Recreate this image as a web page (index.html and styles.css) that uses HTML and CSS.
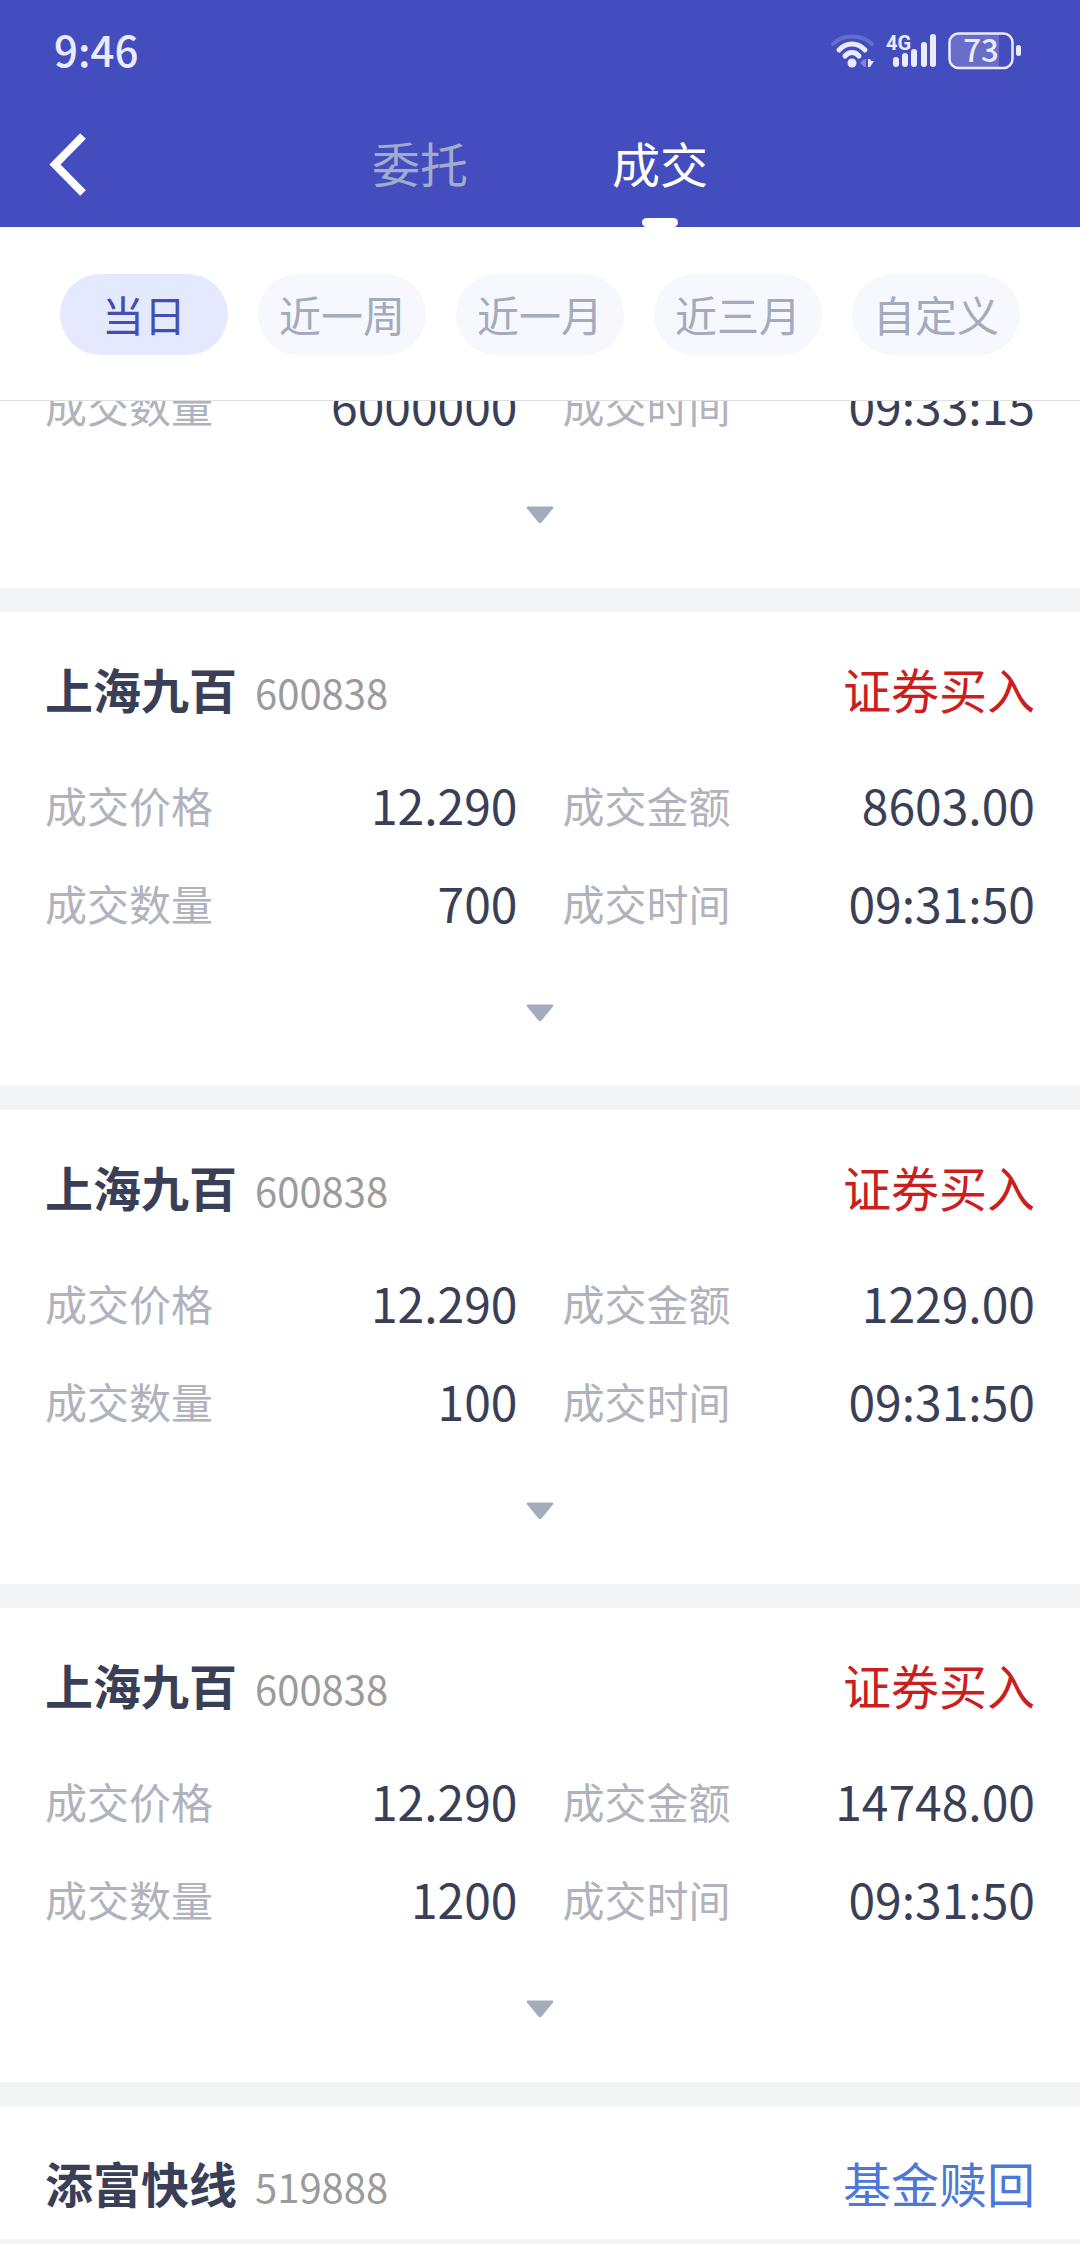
FILE: index.html
```html
<!DOCTYPE html>
<html lang="zh-CN">
<head>
<meta charset="utf-8">
<meta name="viewport" content="width=device-width, initial-scale=1">
<title>成交</title>
<link rel="stylesheet" href="styles.css">
</head>
<body>
<header class="top">
  <div class="status">
    <span class="clock">9:46</span>
    <div class="status-icons">
      <svg class="wifi" width="46" height="38" viewBox="0 0 46 38" fill="none" stroke="#ebebff" stroke-linecap="round" aria-hidden="true">
        <path d="M3 12Q10 4.500 22 4.500T42 12" stroke-width="4" stroke="#666ccb"/>
        <path d="M9 18Q14.500 12 22 12T35 18" stroke-width="5"/>
        <path d="M15 24Q18 20.500 22 20.500T29 24" stroke-width="5"/>
        <circle cx="22" cy="31" r="4.500" fill="#ebebff" stroke="none"/>
        <path d="M36 27v8h-2l-4-4 4-4z" fill="#7e83d8" stroke="none"/>
        <path d="M38 27h2l1 2h3l-2 3-2 3h-2z" fill="#ebebff" stroke="none"/>
      </svg>
      <svg class="signal" width="52" height="38" viewBox="0 0 52 38" fill="#ebebff" aria-hidden="true">
        <text class="network" x="0" y="18">4G</text>
        <rect x="7" y="25" width="6" height="10" rx="3"/>
        <rect x="16" y="21" width="6" height="14" rx="3"/>
        <rect x="25" y="17" width="6" height="18" rx="3"/>
        <rect x="35" y="10" width="6" height="25" rx="3"/>
        <rect x="44" y="2" width="6" height="33" rx="3"/>
      </svg>
      <svg class="battery" width="74" height="38" viewBox="0 0 74 38" aria-hidden="true">
        <path d="M10 1H51V36H10Q1.500 36 1.500 27V10Q1.500 1 10 1z" fill="#686dca"/>
        <rect x="1.500" y="1.500" width="63" height="34.500" rx="9" fill="none" stroke="#ebebff" stroke-width="2.500"/>
        <rect x="68" y="13" width="5" height="11" rx="2.500" fill="#ebebff"/>
        <text class="level" x="33" y="30" text-anchor="middle">73</text>
      </svg>
    </div>
  </div>
  <nav class="nav">
    <button class="back" type="button" aria-label="返回">
      <svg width="38" height="64" viewBox="0 0 38 64" fill="none" stroke="#fff" stroke-width="8" aria-hidden="true"><path d="M35 3L7 31.500l28 28.500"/></svg>
    </button>
    <div class="tabs">
      <button class="tab" type="button">委托</button>
      <button class="tab tab-active" type="button">成交</button>
    </div>
  </nav>
</header>
<div class="filters">
  <button class="pill pill-active" type="button">当日</button>
  <button class="pill" type="button">近一周</button>
  <button class="pill" type="button">近一月</button>
  <button class="pill" type="button">近三月</button>
  <button class="pill" type="button">自定义</button>
</div>
<main class="feed">
  <article class="card card-scrolled">
    <dl class="facts">
      <div class="fact"><dt>成交数量</dt><dd>6000000</dd></div>
      <div class="fact"><dt>成交时间</dt><dd>09:33:15</dd></div>
    </dl>
    <button class="more" type="button" aria-label="展开"><svg width="28" height="18" viewBox="0 0 28 18" aria-hidden="true"><path d="M2 .5H26Q28 .5 27 2.500L15.500 16.500Q14 18 12.500 16.500L1 2.500Q0 .5 2 .5z"/></svg></button>
  </article>
  <article class="card">
    <div class="head"><h2 class="name">上海九百</h2><span class="code">600838</span><span class="side buy">证券买入</span></div>
    <dl class="facts">
      <div class="fact"><dt>成交价格</dt><dd>12.290</dd></div>
      <div class="fact"><dt>成交金额</dt><dd>8603.00</dd></div>
      <div class="fact"><dt>成交数量</dt><dd>700</dd></div>
      <div class="fact"><dt>成交时间</dt><dd>09:31:50</dd></div>
    </dl>
    <button class="more" type="button" aria-label="展开"><svg width="28" height="18" viewBox="0 0 28 18" aria-hidden="true"><path d="M2 .5H26Q28 .5 27 2.500L15.500 16.500Q14 18 12.500 16.500L1 2.500Q0 .5 2 .5z"/></svg></button>
  </article>
  <article class="card">
    <div class="head"><h2 class="name">上海九百</h2><span class="code">600838</span><span class="side buy">证券买入</span></div>
    <dl class="facts">
      <div class="fact"><dt>成交价格</dt><dd>12.290</dd></div>
      <div class="fact"><dt>成交金额</dt><dd>1229.00</dd></div>
      <div class="fact"><dt>成交数量</dt><dd>100</dd></div>
      <div class="fact"><dt>成交时间</dt><dd>09:31:50</dd></div>
    </dl>
    <button class="more" type="button" aria-label="展开"><svg width="28" height="18" viewBox="0 0 28 18" aria-hidden="true"><path d="M2 .5H26Q28 .5 27 2.500L15.500 16.500Q14 18 12.500 16.500L1 2.500Q0 .5 2 .5z"/></svg></button>
  </article>
  <article class="card">
    <div class="head"><h2 class="name">上海九百</h2><span class="code">600838</span><span class="side buy">证券买入</span></div>
    <dl class="facts">
      <div class="fact"><dt>成交价格</dt><dd>12.290</dd></div>
      <div class="fact"><dt>成交金额</dt><dd>14748.00</dd></div>
      <div class="fact"><dt>成交数量</dt><dd>1200</dd></div>
      <div class="fact"><dt>成交时间</dt><dd>09:31:50</dd></div>
    </dl>
    <button class="more" type="button" aria-label="展开"><svg width="28" height="18" viewBox="0 0 28 18" aria-hidden="true"><path d="M2 .5H26Q28 .5 27 2.500L15.500 16.500Q14 18 12.500 16.500L1 2.500Q0 .5 2 .5z"/></svg></button>
  </article>
  <article class="card card-head-only">
    <div class="head"><h2 class="name">添富快线</h2><span class="code">519888</span><span class="side redeem">基金赎回</span></div>
  </article>
</main>
<div class="bottom-edge"></div>
</body>
</html>
```
FILE: styles.css
```css
* {
  box-sizing: border-box;
}

body {
  margin: 0;
  background: #fff;
  color: #3a3f58;
  font-family: "Noto Sans CJK SC", "Noto Sans", sans-serif;
}

button {
  margin: 0;
  padding: 0;
  border: 0;
  background: none;
  font: inherit;
  color: inherit;
}

svg {
  display: block;
  overflow: visible;
}

.top {
  background: #444dbe;
  color: #fff;
}

.status {
  display: flex;
  align-items: center;
  justify-content: space-between;
  height: 102px;
  padding: 0 58px 0 54px;
}

.clock {
  padding-bottom: 4px;
  color: #ebebff;
  font-size: 42px;
  font-weight: 500;
  line-height: 64px;
}

.status-icons {
  display: flex;
  gap: 10px;
}

.network {
  font-family: Roboto, sans-serif;
  font-size: 20px;
  font-weight: 700;
}

.level {
  fill: #ebebff;
  font-size: 31px;
  font-weight: 500;
}

.nav {
  display: grid;
  grid-template-columns: 1fr auto 1fr;
  height: 125px;
}

.back {
  justify-self: start;
  padding: 0 48px;
}

.tabs {
  display: flex;
  gap: 144px;
}

.tab {
  position: relative;
  padding-bottom: 6px;
  color: #a3abcd;
  font-size: 48px;
}

.tab-active {
  color: #fff;
}

.tab-active::after {
  content: "";
  position: absolute;
  bottom: 0;
  left: 50%;
  width: 36px;
  height: 9px;
  margin-left: -18px;
  border-radius: 5px;
  background: #fff;
}

.filters {
  display: flex;
  gap: 30px;
  padding: 47px 60px 45px;
  border-bottom: 1px solid #dedfe0;
}

.pill {
  flex: 1;
  height: 81px;
  padding-bottom: 2px;
  border-radius: 41px;
  background: #f6f8fd;
  color: #a3abbd;
  font-size: 42px;
}

.pill-active {
  background: #e5e9fe;
  color: #444db0;
}

.feed {
  display: flex;
  flex-direction: column;
  gap: 24px;
  overflow: hidden;
  background: #f3f4f6;
}

.card {
  padding: 43px 45px 12px;
  background: #fff;
}

/* the list is scrolled: this card runs up under the filter bar */
.card-scrolled {
  margin-top: -46px;
  padding-top: 0;
}

.card-head-only {
  padding-bottom: 24px;
}

.head {
  display: flex;
  align-items: baseline;
  gap: 18px;
  line-height: 66px;
}

.name {
  margin: 0;
  font-size: 48px;
  font-weight: 700;
}

.code {
  color: #9b9b9b;
  font-size: 40px;
  line-height: 56px;
}

.side {
  margin-left: auto;
  font-size: 48px;
}

.buy {
  color: #cb1e1e;
}

.redeem {
  color: #4d78d8;
}

.facts {
  display: grid;
  grid-template-columns: 1fr 1fr;
  column-gap: 45px;
  margin: 0;
}

.head + .facts {
  margin-top: 34px;
}

.fact {
  display: flex;
  align-items: center;
  justify-content: space-between;
  height: 98px;
}

.fact dt {
  color: #b0b3be;
  font-size: 42px;
}

.fact dd {
  margin: 0;
  font-size: 48px;
}

.more {
  display: flex;
  align-items: center;
  justify-content: center;
  width: 100%;
  height: 123px;
}

.more svg {
  fill: #a3abbd;
}

.bottom-edge {
  height: 5px;
  background: #f4f4f5;
}
```
